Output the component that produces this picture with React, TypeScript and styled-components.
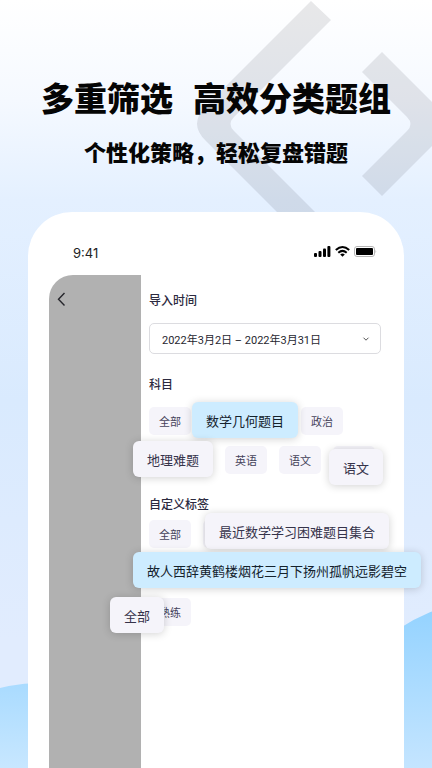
import React from "react";
import styled, { createGlobalStyle } from "styled-components";

const GlobalStyle = createGlobalStyle`
  *, *::before, *::after { box-sizing: border-box; }
  body {
    margin: 0;
    font-family: Inter, "Noto Sans CJK SC", sans-serif;
    color: #2c2a40;
  }
  button, h1, h2, p { margin: 0; font: inherit; color: inherit; }
`;

const Page = styled.main`
  position: relative;
  z-index: 0;
  display: flex;
  flex-direction: column;
  min-height: 100vh;
  overflow: hidden;
  background: linear-gradient(180deg, #ffffff 0, #f5f9ff 100px, #e4f0ff 200px, #d9eafe 400px, #e1ecfe 640px, #e1ecfe 100%);
`;

const BrandMark = styled.svg`
  position: absolute;
  z-index: -1;
  top: 0;
  right: 0;
  fill: rgba(28, 28, 40, 0.1);
`;

const Hill = styled.div<{ $side: "left" | "right" }>`
  position: absolute;
  z-index: -1;
  width: 320px;
  height: 320px;
  border-radius: 50%;
  ${(p) =>
    p.$side === "left"
      ? "left: -120px; bottom: -235px; background: linear-gradient(180deg, #a9dbff, #cde9ff 100px);"
      : "right: -217px; bottom: -153px; background: linear-gradient(180deg, #92d2ff, #c5e5ff 170px);"}
`;

const Hero = styled.header`
  display: flex;
  flex-direction: column;
  align-items: center;
  gap: 12px;
  padding: 72px 16px 44px;
  color: #050505;
  font-family: "Noto Sans CJK SC", sans-serif;
  white-space: nowrap;
`;

const Title = styled.h1`
  && { font-size: 33px; line-height: 50px; font-weight: 900; }
  display: flex;
  gap: 20px;
`;

const Subtitle = styled.p`
  && { font-size: 22px; line-height: 34px; font-weight: 900; }
`;

const Phone = styled.section`
  flex: 1;
  display: flex;
  flex-direction: column;
  margin: 0 28px;
  padding-left: 21px;
  background: #fff;
  border-radius: 44px 44px 0 0;
`;

const StatusBar = styled.div`
  display: flex;
  align-items: center;
  justify-content: space-between;
  height: 63px;
  padding: 18px 27px 0 24px;
  font-size: 13px;
  color: #222;
`;

const StatusIcons = styled.div`
  display: flex;
  align-items: center;
  gap: 4px;
  margin-bottom: 3px;
`;

const Screen = styled.div`
  flex: 1;
  display: flex;
`;

const Backdrop = styled.div`
  width: 92px;
  padding: 14px 4px;
  background: #b1b1b1;
  border-radius: 24px 0 0 0;
`;

const BackButton = styled.button`
  display: flex;
  padding: 2px;
  border: 0;
  background: none;
`;

const Filters = styled.div`
  flex: 1;
  min-width: 0;
  padding: 17px 23px 0 8px;
`;

const Group = styled.section`
  margin-bottom: 22px;
`;

const Heading = styled.h2<{ $gap: number }>`
  && { font-size: 12px; line-height: 18px; font-weight: 500; }
  margin-bottom: ${(p) => p.$gap}px;
`;

const DateButton = styled.button`
  display: flex;
  align-items: center;
  justify-content: space-between;
  width: 100%;
  height: 31px;
  padding: 0 10px 0 12px;
  border: 1px solid #dcdce0;
  border-radius: 5px;
  background: #fff;
  && {
    font-family: Roboto, "Noto Sans CJK SC", sans-serif;
    font-size: 11px;
    color: #27272f;
  }
`;

const Tags = styled.div`
  display: flex;
  flex-wrap: wrap;
  gap: 11px 12px;
`;

const Chip = styled.button`
  height: 28px;
  padding: 0 10px;
  border: 0;
  border-radius: 5px;
  background: #f5f4fa;
  white-space: nowrap;
  && { font-size: 11px; color: #45435a; }
`;

const Slot = styled.div<{ $chars: number }>`
  position: relative;
  width: ${(p) => p.$chars * 11 + 20}px;
  max-width: 100%;
  height: 28px;
  border-radius: 5px;
  background: #f5f4fa;
`;

const RaisedChip = styled.button<{ $x: number; $y: number; $active?: boolean }>`
  position: absolute;
  z-index: 1;
  left: ${(p) => p.$x}px;
  top: ${(p) => p.$y}px;
  height: 36px;
  padding: 0 14px;
  border: 0;
  border-radius: 6px;
  background: ${(p) => (p.$active ? "#cdecff" : "#f5f4fa")};
  box-shadow: 0 1px 8px rgba(0, 0, 0, 0.18);
  white-space: nowrap;
  && { font-size: 13px; color: ${(p) => (p.$active ? "#14222c" : "#35334a")}; }
`;

const Anchor = styled.div`
  position: relative;
  display: flex;
`;

type Tag = { text: string; raised?: { x: number; y: number; active?: boolean } };

const subjects: Tag[] = [
  { text: "全部" },
  { text: "数学几何题目", raised: { x: -11, y: -5, active: true } },
  { text: "政治" },
  { text: "地理难题", raised: { x: -16, y: -5 } },
  { text: "英语" },
  { text: "语文" },
  { text: "语文", raised: { x: -4, y: 3 } },
];

const customTags: Tag[] = [
  { text: "全部" },
  { text: "最近数学学习困难题目集合", raised: { x: 2, y: -7 } },
  { text: "故人西辞黄鹤楼烟花三月下扬州孤帆远影碧空", raised: { x: -16, y: -7, active: true } },
];

const TagItem = ({ tag }: { tag: Tag }) =>
  tag.raised ? (
    <Slot $chars={tag.text.length}>
      <RaisedChip
        type="button"
        aria-pressed={!!tag.raised.active}
        $x={tag.raised.x}
        $y={tag.raised.y}
        $active={tag.raised.active}
      >
        {tag.text}
      </RaisedChip>
    </Slot>
  ) : (
    <Chip type="button">{tag.text}</Chip>
  );

export default function App() {
  return (
    <>
      <GlobalStyle />
      <Page>
        <BrandMark width="240" height="220" viewBox="192 0 240 220" aria-hidden="true">
          <path d="M311 1 331 20 234 117Q227 124 234 131L323 220H285L206 141Q188 124 206 106Z" />
          <path d="M382 52 454 124 382 196 362 176 407 131Q414 124 407 117L362 72Z" />
        </BrandMark>
        <Hill $side="left" />
        <Hill $side="right" />
        <Hero>
          <Title>
            <span>多重筛选</span>
            <span>高效分类题组</span>
          </Title>
          <Subtitle>个性化策略，轻松复盘错题</Subtitle>
        </Hero>
        <Phone>
          <StatusBar>
            <span>9:41</span>
            <StatusIcons>
              <svg width="17" height="11" viewBox="0 0 17 11" aria-label="信号">
                <rect x="0" y="7" width="3" height="4" rx="1" />
                <rect x="4.5" y="5" width="3" height="6" rx="1" />
                <rect x="9" y="2.5" width="3" height="8.5" rx="1" />
                <rect x="13.4" y="0" width="3" height="11" rx="1" />
              </svg>
              <svg width="15" height="11" viewBox="0 0 15 11" aria-label="无线网络">
                <g fill="none" stroke="#000" strokeWidth="2">
                  <path d="M.8 4.1Q7.5-2 14.2 4.1" />
                  <path d="M3.3 6.7Q7.5 3 11.7 6.7" />
                </g>
                <path d="M5.2 8.4Q7.5 6.6 9.8 8.4L7.5 10.8Z" />
              </svg>
              <svg width="23" height="11" viewBox="0 0 23 11" aria-label="电量">
                <rect x=".5" y=".5" width="20" height="10" rx="2.5" fill="#fff" stroke="#b5b5b5" />
                <rect x="2" y="2" width="17" height="7" rx="1" />
                <path d="M21.5 3.8Q23 5.5 21.5 7.2Z" fill="#b5b5b5" />
              </svg>
            </StatusIcons>
          </StatusBar>
          <Screen>
            <Backdrop>
              <BackButton type="button" aria-label="返回">
                <svg width="14" height="16" viewBox="0 0 14 16" fill="none" stroke="#26262c" strokeWidth="1.4">
                  <path d="M9.5 2 3.5 8.2 9.5 14.4" />
                </svg>
              </BackButton>
            </Backdrop>
            <Filters>
              <Group>
                <Heading $gap={13}>导入时间</Heading>
                <DateButton type="button">
                  <span>2022年3月2日 – 2022年3月31日</span>
                  <svg width="8" height="8" viewBox="0 0 8 8" fill="none" stroke="#555" aria-hidden="true">
                    <path d="M1.5 2.7 4 5.2 6.5 2.7" />
                  </svg>
                </DateButton>
              </Group>
              <Group>
                <Heading $gap={13}>科目</Heading>
                <Tags>
                  {subjects.map((tag, i) => (
                    <TagItem key={i} tag={tag} />
                  ))}
                </Tags>
              </Group>
              <Group>
                <Heading $gap={6}>自定义标签</Heading>
                <Tags>
                  {customTags.map((tag) => (
                    <TagItem key={tag.text} tag={tag} />
                  ))}
                  <Anchor>
                    <Chip type="button">熟练</Chip>
                    <RaisedChip type="button" $x={-39} $y={-1}>
                      全部
                    </RaisedChip>
                  </Anchor>
                </Tags>
              </Group>
            </Filters>
          </Screen>
        </Phone>
      </Page>
    </>
  );
}
